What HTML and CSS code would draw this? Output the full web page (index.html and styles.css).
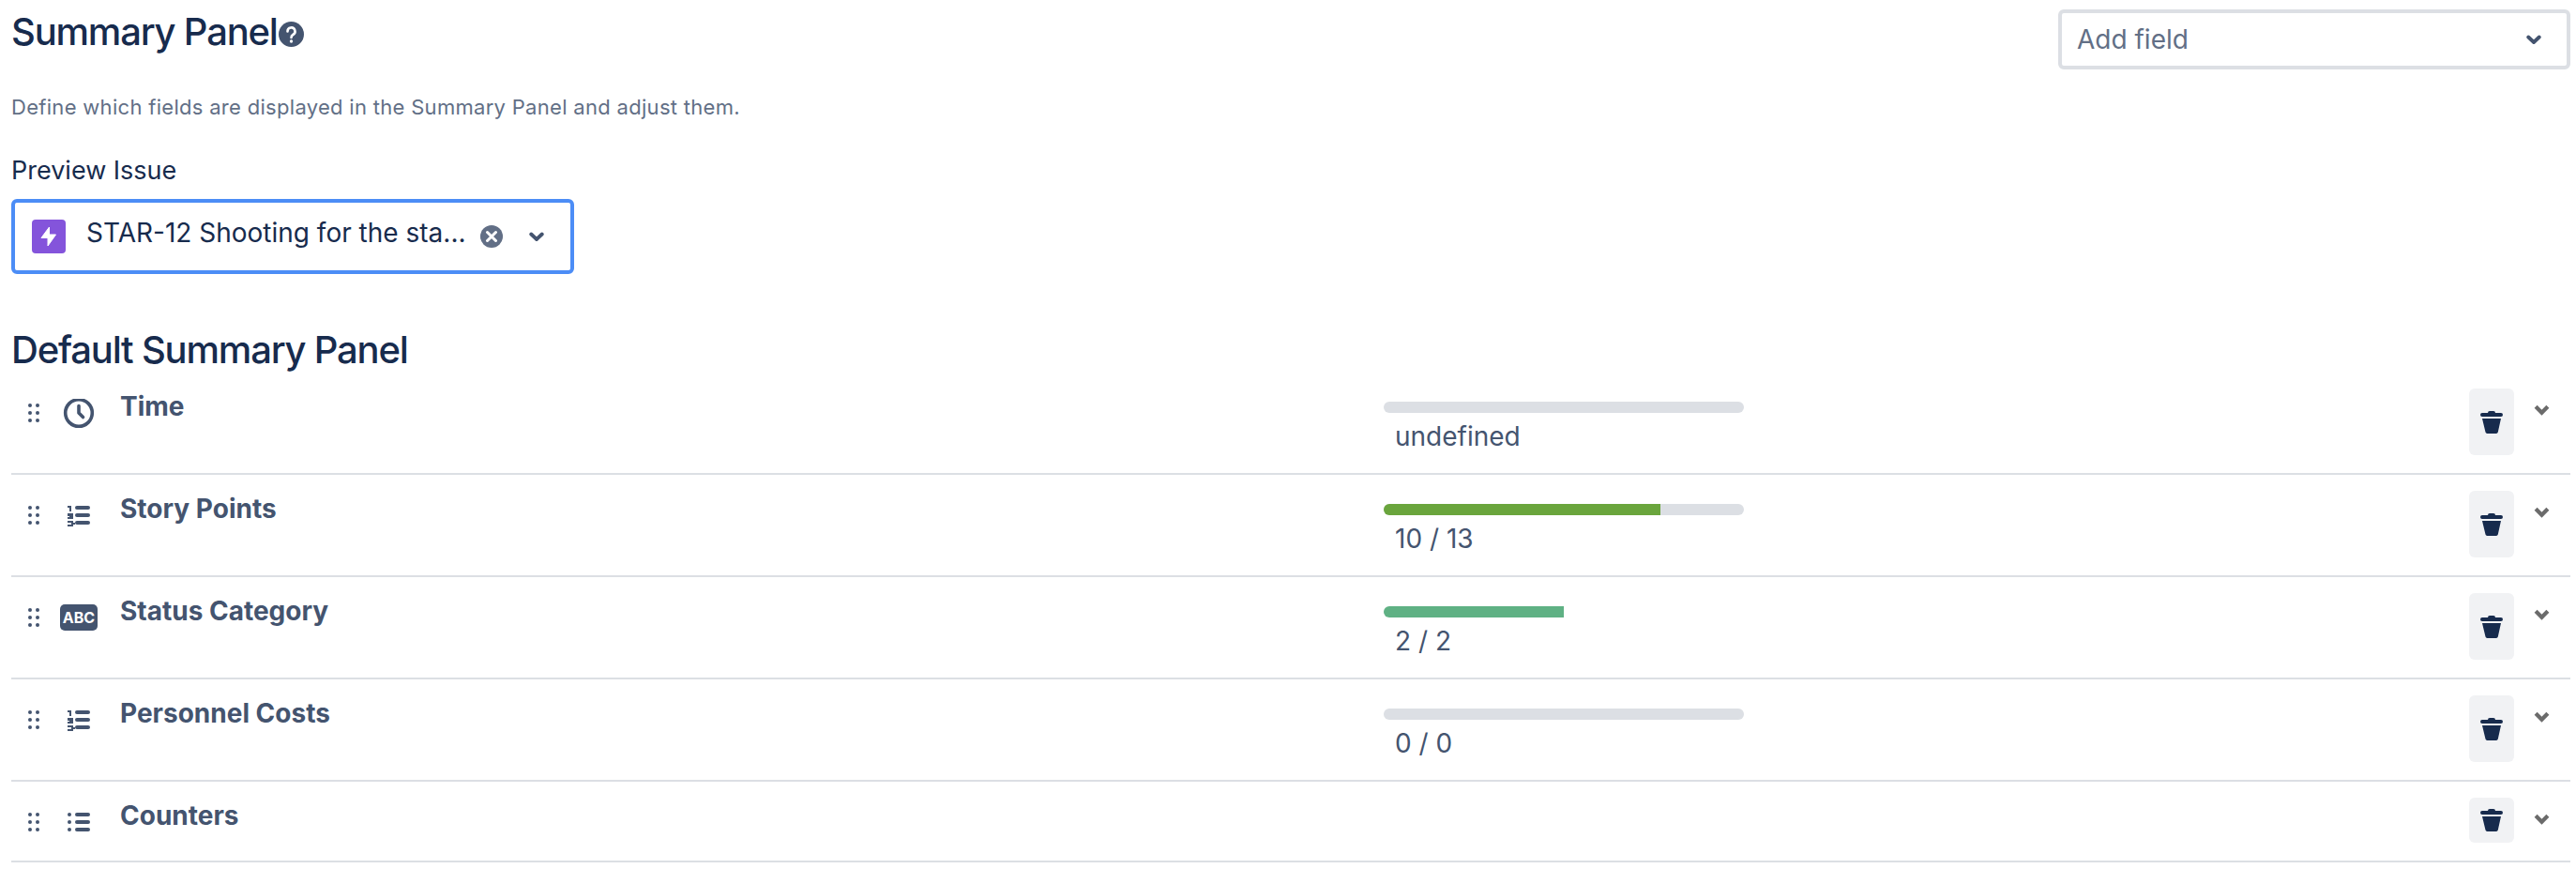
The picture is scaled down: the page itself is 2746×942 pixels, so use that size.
FILE: index.html
```
<!DOCTYPE html>
<html lang="en">
<head>
    <meta charset="UTF-8">
    <meta name="viewport" content="width=device-width, initial-scale=1.0">
    <title>Summary Panel</title>
    <link rel="stylesheet" href="styles.css">
</head>
<body>
    <!-- shared icons -->
    <svg class="sprite">
        <symbol id="drag" viewBox="0 0 12 20">
            <circle cx="2" cy="2" r="2"/><circle cx="10" cy="2" r="2"/>
            <circle cx="2" cy="10" r="2"/><circle cx="10" cy="10" r="2"/>
            <circle cx="2" cy="18" r="2"/><circle cx="10" cy="18" r="2"/>
        </symbol>
        <symbol id="numbered" viewBox="0 0 40 32">
            <path d="M8 5h4v6h-2V7H8zM8 13h6v6H8v-2h2v-1H8zM8 21h6v2h2v2h-2v2H8v-2h4v-2H8z"/>
            <rect x="16" y="5" width="16" height="4" rx="2"/>
            <rect x="16" y="13" width="16" height="4" rx="2"/>
            <rect x="16" y="21" width="16" height="4" rx="2"/>
        </symbol>
        <symbol id="trash" viewBox="0 0 24 24">
            <path d="M2 2h6a2 2 0 0 1 2-2h4a2 2 0 0 1 2 2h6a2 2 0 0 1 0 4H2a2 2 0 0 1 0-4zM2 8h20l-3.2 14.5A2 2 0 0 1 17 24H7.500a2 2 0 0 1-2-1.500z"/>
        </symbol>
        <symbol id="chevron" viewBox="0 0 16 11">
            <path d="M2 2l6 6 6-6" fill="none" stroke="currentColor" stroke-width="4"/>
        </symbol>
        <symbol id="chevron-round" viewBox="0 0 16 11">
            <path d="M2.200 2.500l5.800 5.500 5.800-5.500" fill="none" stroke="currentColor" stroke-width="3.800" stroke-linecap="round" stroke-linejoin="round"/>
        </symbol>
    </svg>

    <header class="top">
        <div class="title">
            <h1>Summary Panel</h1>
            <svg class="help" viewBox="0 0 27 27">
                <circle cx="13.500" cy="13.500" r="13.500"/>
                <path d="M9.500 10.500a4 4 0 1 1 5.800 3.500c-1.300.7-1.800 1.200-1.800 3" fill="none" stroke="#fff" stroke-width="2.600" stroke-linecap="round"/>
                <circle cx="13.500" cy="21" r="1.700" fill="#fff"/>
            </svg>
        </div>
        <div class="select add-field">
            <span>Add field</span>
            <svg class="chevron"><use href="#chevron-round"/></svg>
        </div>
    </header>

    <p class="description">Define which fields are displayed in the Summary Panel and adjust them.</p>

    <div class="label">Preview Issue</div>
    <div class="select issue">
        <svg class="epic" viewBox="0 0 36 36">
            <rect width="36" height="36" rx="4" fill="#8454db"/>
            <path d="M18.500 8L10 19.500h7V28l8.500-12h-7z" fill="#fff" stroke="#fff" stroke-linejoin="round"/>
        </svg>
        <span class="issue-name">STAR-12 Shooting for the sta...</span>
        <svg class="clear" viewBox="0 0 24 24">
            <circle cx="12" cy="12" r="12" fill="#626f86"/>
            <path d="M7.500 7.500l9 9m0-9l-9 9" stroke="#fff" stroke-width="3" stroke-linecap="round"/>
        </svg>
        <svg class="chevron"><use href="#chevron-round"/></svg>
    </div>

    <h2>Default Summary Panel</h2>
    <main class="fields">
        <div class="field">
            <svg class="drag"><use href="#drag"/></svg>
            <svg class="type" viewBox="0 0 40 32">
                <circle cx="20" cy="15" r="14.300" fill="none" stroke="currentColor" stroke-width="3.600"/>
                <path d="M20 7.500V15l4.500 4.500" fill="none" stroke="currentColor" stroke-width="3.600" stroke-linecap="round" stroke-linejoin="round"/>
            </svg>
            <div class="name">Time</div>
            <div class="value">
                <div class="bar"></div>
                <div class="count">undefined</div>
            </div>
            <button class="delete"><svg><use href="#trash"/></svg></button>
            <svg class="expand"><use href="#chevron"/></svg>
        </div>
        <div class="field">
            <svg class="drag"><use href="#drag"/></svg>
            <svg class="type"><use href="#numbered"/></svg>
            <div class="name">Story Points</div>
            <div class="value">
                <div class="bar"><div class="fill points" style="width: 76.900%"></div></div>
                <div class="count">10 / 13</div>
            </div>
            <button class="delete"><svg><use href="#trash"/></svg></button>
            <svg class="expand"><use href="#chevron"/></svg>
        </div>
        <div class="field">
            <svg class="drag"><use href="#drag"/></svg>
            <span class="type abc">ABC</span>
            <div class="name">Status Category</div>
            <div class="value">
                <div class="bar empty"><div class="fill status" style="width: 50%"></div></div>
                <div class="count">2 / 2</div>
            </div>
            <button class="delete"><svg><use href="#trash"/></svg></button>
            <svg class="expand"><use href="#chevron"/></svg>
        </div>
        <div class="field">
            <svg class="drag"><use href="#drag"/></svg>
            <svg class="type"><use href="#numbered"/></svg>
            <div class="name">Personnel Costs</div>
            <div class="value">
                <div class="bar"></div>
                <div class="count">0 / 0</div>
            </div>
            <button class="delete"><svg><use href="#trash"/></svg></button>
            <svg class="expand"><use href="#chevron"/></svg>
        </div>
        <div class="field small">
            <svg class="drag"><use href="#drag"/></svg>
            <svg class="type" viewBox="0 0 40 32">
                <circle cx="10" cy="7" r="2"/><circle cx="10" cy="15" r="2"/><circle cx="10" cy="23" r="2"/>
                <rect x="16" y="5" width="16" height="4" rx="2"/>
                <rect x="16" y="13" width="16" height="4" rx="2"/>
                <rect x="16" y="21" width="16" height="4" rx="2"/>
            </svg>
            <div class="name">Counters</div>
            <div class="value"></div>
            <button class="delete"><svg><use href="#trash"/></svg></button>
            <svg class="expand"><use href="#chevron"/></svg>
        </div>
    </main>
</body>
</html>
```
FILE: styles.css
```
* {
    box-sizing: border-box;
}
body {
    margin: 0;
    padding: 10px 6px 0 12px;
    height: 942px;
    overflow: hidden;
    background: #fff;
    color: #172b4d;
    font-family: Inter, "Liberation Sans", sans-serif;
    font-size: 28px;
    line-height: 40px;
}
svg {
    display: block;
    flex: none;
    fill: currentColor;
}
.sprite {
    display: none;
}
h1, h2 {
    margin: 0;
    font-size: 40px;
    line-height: 48px;
    font-weight: 500;
    white-space: nowrap;
}
h1 {
    width: 273px;
    letter-spacing: -1.2px;
}
h2 {
    margin-top: 57px;
    letter-spacing: -1.2px;
}
.top {
    display: flex;
    justify-content: space-between;
    height: 64px;
}
.title {
    display: flex;
    align-items: flex-start;
    gap: 12px;
}
.help {
    width: 27px;
    height: 27px;
    margin-top: 13px;
    color: #44546f;
}
.select {
    display: flex;
    align-items: center;
    border: 4px solid #dcdfe4;
    border-radius: 6px;
}
.chevron {
    width: 16px;
    height: 11px;
    color: #44546f;
}
.add-field {
    width: 546px;
    height: 64px;
    padding: 0 27px 0 16px;
    justify-content: space-between;
    color: #626f86;
}
.description {
    margin: 20px 0 0;
    color: #626f86;
    font-size: 22px;
    letter-spacing: 0.3px;
}
.label {
    margin-top: 28px;
    font-size: 27px;
}
.issue {
    width: 600px;
    height: 80px;
    margin-top: 10px;
    padding-left: 18px;
    border-color: #4c8df6;
}
.epic {
    width: 36px;
    height: 36px;
}
.issue-name {
    width: 404px;
    margin: 0 16px 8px 22px;
    white-space: nowrap;
}
.clear {
    width: 24px;
    height: 24px;
    margin-right: 28px;
}
.field {
    display: flex;
    align-items: flex-start;
    height: 109px;
    border-bottom: 2px solid #dcdfe4;
    color: #44546f;
}
.field.small {
    height: 86px;
}
.drag {
    width: 12px;
    height: 20px;
    margin: 33px 22px 0 18px;
}
.type {
    width: 40px;
    height: 32px;
    margin: 28px 24px 0 0;
}
.abc {
    height: 28px;
    margin-top: 29px;
    border-radius: 5px;
    background: #44546f;
    color: #fff;
    font-size: 16px;
    font-weight: 700;
    line-height: 29px;
    text-align: center;
}
.name {
    width: 1347px;
    padding-top: 16px;
    font-weight: 700;
}
.value {
    flex: 1;
    padding-top: 31px;
}
.bar {
    width: 384px;
    height: 12px;
    border-radius: 6px;
    background: #dcdfe4;
    overflow: hidden;
}
.bar.empty {
    background: none;
}
.fill {
    height: 12px;
}
.points {
    background: #6aa53d;
}
.status {
    background: #5fb184;
}
.count {
    margin: 9px 0 0 12px;
    line-height: 32px;
}
.delete {
    display: flex;
    align-items: center;
    justify-content: center;
    width: 48px;
    height: 71px;
    margin: 17px 21px 0 0;
    padding: 0;
    border: 0;
    border-radius: 6px;
    background: #f1f2f4;
    color: #172b4d;
}
.delete svg {
    width: 24px;
    height: 24px;
}
.small .delete {
    height: 48px;
}
.expand {
    width: 17px;
    height: 12px;
    margin: 34px 22px 0 0;
    color: #6b6b6b;
}
```
